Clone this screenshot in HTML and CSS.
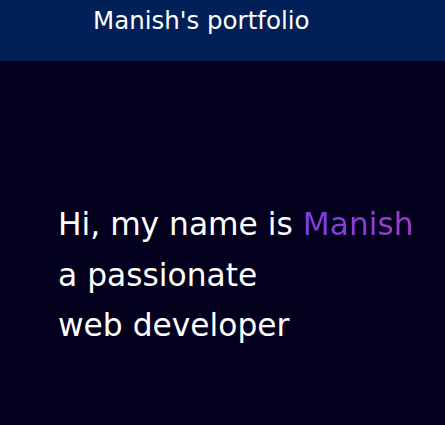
FILE: index.html
```html
<!DOCTYPE html>
<html>
<head>
<meta charset="utf-8">
<link rel="stylesheet" href="styles.css">
</head>
<body>
<header class="topbar">
  <div class="brand">Manish's portfolio</div>
</header>
<main class="hero">
  <h1 class="intro">Hi, my name is <span class="name">Manish</span><br>a passionate<br>web developer</h1>
</main>
</body>
</html>
```
FILE: styles.css
```css
html, body {
  margin: 0;
  padding: 0;
  background: #03001e;
  height: 100%;
}
body {
  font-family: "DejaVu Sans", sans-serif;
  color: #ffffff;
}
.topbar {
  height: 61px;
  background: #012057;
  box-sizing: border-box;
  padding: 6px 0 0 93px;
}
.brand {
  font-size: 24.5px;
  line-height: 30px;
}
.hero {
  padding: 138px 0 0 58px;
}
.intro {
  margin: 0;
  font-weight: normal;
  font-size: 31.3px;
  line-height: 50.5px;
}
.name {
  background: linear-gradient(90deg, #7a3ee3, #a23bcd);
  -webkit-background-clip: text;
  background-clip: text;
  color: transparent;
}
```
